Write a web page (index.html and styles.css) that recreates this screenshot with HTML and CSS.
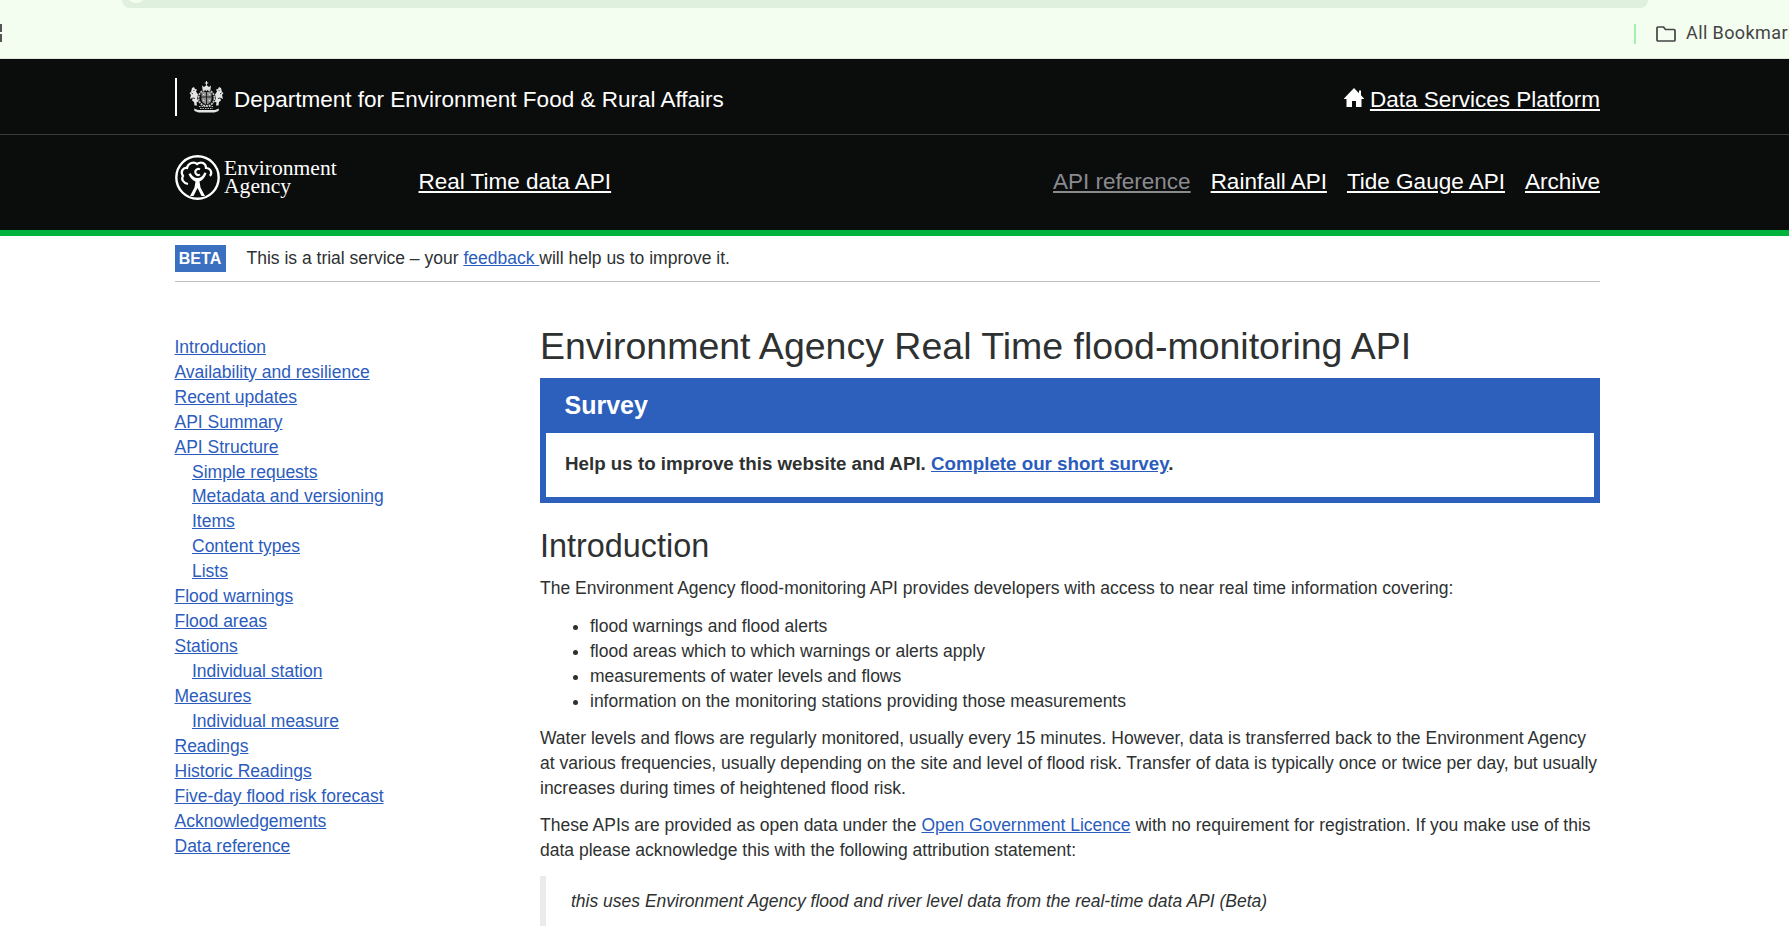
FILE: index.html
```html
<!DOCTYPE html>
<html lang="en">
<head>
    <meta charset="UTF-8">
    <meta name="viewport" content="width=device-width, initial-scale=1.0">
    <title>Environment Agency Real Time flood-monitoring API</title>
    <link rel="stylesheet" href="styles.css">
</head>
<body>
    <!-- browser chrome strip above the page -->
    <div class="browser-bar">
        <div class="address-bar"></div>
        <div class="dots"></div>
        <div class="bookmarks">
            <span class="bookmarks-sep"></span>
            <svg class="folder" width="20" height="16" viewBox="0 0 20 16"><path d="M1 14V2a1 1 0 0 1 1-1h5.500l2 2.500H18a1 1 0 0 1 1 1V14a1 1 0 0 1-1 1H2a1 1 0 0 1-1-1z" fill="none" stroke="#444" stroke-width="1.700"/></svg>
            <span>All Bookmarks</span>
        </div>
    </div>

    <header class="site-header">
        <div class="header-top">
            <div class="wrap top-row">
                <div class="dept">
                    <!-- royal arms, rough hand drawing -->
                    <svg class="crest" width="37" height="32" viewBox="0 0 37 32">
                        <g fill="#e4e4e4">
                            <path d="M18 0h1v1.500h1.200v1H19V4h-1V2.500h-1.200v-1H18z"/>
                            <path d="M14 4.500l2 1.500 2.500-2 2.500 2 2-1.500-.6 4.500h-7.800z"/>
                            <path d="M4 7l2-1 1 2 2 .5-1 2 2 3-1 4 1.500 3-2 1 .5 3H6.500l-.5-3.500-2-1.500 1-3-3 1.500 1-4-1.500-2L3 11z"/>
                            <path d="M33 7l-2-1-1 2-2 .5 1 2-2 3 1 4-1.500 3 2 1-.5 3h2.500l.5-3.500 2-1.500-1-3 3 1.500-1-4 1.500-2L34 11z"/>
                            <path d="M6 27.500l4 1.500h17l4-1.500-.5 2.500-4 1.500h-16l-4-1.500z"/>
                        </g>
                        <circle cx="18.500" cy="17" r="8" fill="none" stroke="#c8c8c8" stroke-width="1.800" stroke-dasharray="2 .8"/>
                        <path d="M13.500 11h10v7.500c0 2.500-2.500 4-5 5.500-2.500-1.500-5-3-5-5.500z" fill="#8c8c8c"/>
                        <path d="M13.500 16h10M18.500 11v13" stroke="#0b0c0c" stroke-width=".8"/>
                        <path d="M15 13l1.500 1M20.500 13l1.500 1M15 19l1.500 1M20.500 19l1.500 1" stroke="#eee" stroke-width="1"/>
                        <path d="M3.500 12l1.500 1M5 17l2 .5M32 13l1.500-1M30 17.500l2-.5M5.500 9l1 1M31.500 9l-1 1" stroke="#0b0c0c" stroke-width=".8"/>
                        <path d="M11 25.500h15M12 27.500h13" stroke="#bdbdbd" stroke-width="1" stroke-dasharray="1.500 1"/>
                    </svg>
                    <span class="dept-name">Department for Environment Food &amp; Rural Affairs</span>
                </div>
                <div class="platform">
                    <svg width="20" height="19" viewBox="0 0 20 19"><path d="M10 0l5 5.200V2.500h2v4.800l3 3.100v.6h-2.500V19H12v-6H8v6H2.500v-8.000H0v-.6z" fill="#fff"/></svg>
                    <a href="#">Data Services Platform</a>
                </div>
            </div>
        </div>
        <div class="wrap nav-row">
            <div class="ea-logo">
                <svg width="45" height="45" viewBox="0 0 45 45">
                    <circle cx="22.500" cy="22.500" r="21.200" fill="none" stroke="#fff" stroke-width="2.400"/>
                    <path d="M13 29C8 28 6 24 8 21c-3-4 0-9 4-8 1-5 7-7 10-4 4-3 9-1 9 4 4 0 7 4 4 8" fill="none" stroke="#fff" stroke-width="2.200"/>
                    <path d="M25 14.500a3 3 0 1 0 0 5" fill="none" stroke="#fff" stroke-width="2"/>
                    <path d="M13.500 19c1.500 4 4.500 6.500 7 7.500l-1 6L15 41h3.500l4-8 4 8H30l-4.500-8.500-1-6c2.500-1 5.500-3.500 7-8.500l-2.200-.6c-1.500 4-3.800 5.600-6.800 5.600s-5.300-1.600-6.800-4.800z" fill="#fff"/>
                </svg>
                <div class="ea-name">Environment<br>Agency</div>
            </div>
            <a class="nav-title" href="#">Real Time data API</a>
            <nav class="nav-links">
                <a class="current" href="#">API reference</a>
                <a href="#">Rainfall API</a>
                <a href="#">Tide Gauge API</a>
                <a href="#">Archive</a>
            </nav>
        </div>
    </header>

    <div class="wrap">
        <div class="beta-banner">
            <span class="beta-tag">BETA</span>
            <span>This is a trial service – your <a href="#">feedback </a>will help us to improve it.</span>
        </div>

        <div class="layout">
            <ul class="sidebar">
                <li><a href="#">Introduction</a></li>
                <li><a href="#">Availability and resilience</a></li>
                <li><a href="#">Recent updates</a></li>
                <li><a href="#">API Summary</a></li>
                <li><a href="#">API Structure</a>
                    <ul>
                        <li><a href="#">Simple requests</a></li>
                        <li><a href="#">Metadata and versioning</a></li>
                        <li><a href="#">Items</a></li>
                        <li><a href="#">Content types</a></li>
                        <li><a href="#">Lists</a></li>
                    </ul>
                </li>
                <li><a href="#">Flood warnings</a></li>
                <li><a href="#">Flood areas</a></li>
                <li><a href="#">Stations</a>
                    <ul>
                        <li><a href="#">Individual station</a></li>
                    </ul>
                </li>
                <li><a href="#">Measures</a>
                    <ul>
                        <li><a href="#">Individual measure</a></li>
                    </ul>
                </li>
                <li><a href="#">Readings</a></li>
                <li><a href="#">Historic Readings</a></li>
                <li><a href="#">Five-day flood risk forecast</a></li>
                <li><a href="#">Acknowledgements</a></li>
                <li><a href="#">Data reference</a></li>
            </ul>

            <main class="content">
                <h1>Environment Agency Real Time flood-monitoring API</h1>
                <div class="survey">
                    <h2>Survey</h2>
                    <p>Help us to improve this website and API. <a href="#">Complete our short survey</a>.</p>
                </div>
                <h2 class="section-title">Introduction</h2>
                <p>The Environment Agency flood-monitoring API provides developers with access to near real time information covering:</p>
                <ul class="covering">
                    <li>flood warnings and flood alerts</li>
                    <li>flood areas which to which warnings or alerts apply</li>
                    <li>measurements of water levels and flows</li>
                    <li>information on the monitoring stations providing those measurements</li>
                </ul>
                <p>Water levels and flows are regularly monitored, usually every 15 minutes. However, data is transferred back to the Environment Agency at various frequencies, usually depending on the site and level of flood risk. Transfer of data is typically once or twice per day, but usually increases during times of heightened flood risk.</p>
                <p>These APIs are provided as open data under the <a href="#">Open Government Licence</a> with no requirement for registration. If you make use of this data please acknowledge this with the following attribution statement:</p>
                <blockquote>this uses Environment Agency flood and river level data from the real-time data API (Beta)</blockquote>
            </main>
        </div>
    </div>
</body>
</html>
```

FILE: styles.css
```css
html, body {
    height: 948px;
    overflow: hidden;
}
body {
    margin: 0;
    font-family: "Liberation Sans", Arial, sans-serif;
    font-size: 16px;
    line-height: 25px;
    color: #2e3131;
    background: #fff;
}
a {
    color: #2b5cbd;
}
.wrap {
    width: 1425.500px;
    margin-left: 174.500px;
}

/* browser strip */
.browser-bar {
    height: 59px;
    box-sizing: border-box;
    position: relative;
    background: #f3fdf0;
    border-bottom: 1px solid #dfe6dc;
    font-family: Roboto, "Open Sans", sans-serif;
}
.address-bar {
    position: absolute;
    left: 122px;
    top: 0;
    width: 1526px;
    height: 8px;
    background: #e0f0df;
    border-radius: 0 0 12px 12px;
}
.address-bar::before {
    content: "";
    position: absolute;
    left: 6px;
    top: -8px;
    width: 16px;
    height: 11px;
    border-radius: 50%;
    background: #f3fdf0;
}
.dots {
    position: absolute;
    left: 0;
    top: 24px;
    width: 2px;
    height: 18px;
    background: repeating-linear-gradient(#555 0 8px, transparent 8px 10px);
}
.bookmarks {
    position: absolute;
    left: 1634px;
    top: 20px;
    display: flex;
    align-items: center;
    gap: 10px;
    width: 155px;
    overflow: hidden;
    white-space: nowrap;
    color: #444;
    font-size: 18px;
    letter-spacing: .4px;
}
.bookmarks-sep {
    width: 2px;
    height: 20px;
    margin-top: 2px;
    margin-right: 10px;
    background: #a6f0ae;
    flex: none;
}
.folder {
    flex: none;
    margin-top: 3px;
}

/* header */
.site-header {
    background: #0b0c0c;
    border-bottom: 6px solid #00b33c;
    color: #fff;
}
.site-header a {
    color: #fff;
}
.header-top {
    height: 75px;
    border-bottom: 1px solid #3a3b3d;
}
.top-row {
    height: 75px;
    display: flex;
    justify-content: space-between;
    align-items: center;
}
.dept {
    display: flex;
    align-items: center;
    height: 38px;
    border-left: 2px solid #fff;
    padding-left: 11px;
    font-size: 22.500px;
}
.dept-name {
    padding-top: 5px;
}
.crest {
    margin-right: 9.500px;
}
.platform {
    display: flex;
    align-items: center;
    gap: 6px;
    font-size: 22.500px;
}
.platform a {
    padding-top: 5px;
}
.platform svg {
    margin-top: 2px;
}
.nav-row {
    height: 93px;
    padding-bottom: 2px;
    display: flex;
    align-items: center;
}
.ea-logo {
    display: flex;
    align-items: flex-start;
    align-self: flex-start;
    width: 244px;
    margin-top: 20px;
    gap: 4.500px;
}
.ea-name {
    font-family: "Liberation Serif", serif;
    font-size: 21.600px;
    line-height: 18px;
    margin-top: 4px;
}
.nav-title, .nav-links {
    font-size: 22.500px;
}
.nav-links {
    margin-left: auto;
    display: flex;
    gap: 20px;
}
.site-header .nav-links .current {
    color: #8a8b8f;
}

/* beta */
.beta-banner {
    height: 45px;
    display: flex;
    align-items: center;
    gap: 21px;
    border-bottom: 1px solid #bfc1c3;
    font-size: 17.500px;
}
.beta-tag {
    width: 51px;
    height: 27px;
    background: #3b6fc0;
    color: #fff;
    font-weight: bold;
    font-size: 16px;
    line-height: 27px;
    text-align: center;
}

/* two columns */
.layout {
    display: flex;
    margin-top: 41px;
}
.sidebar, .sidebar ul {
    list-style: none;
    margin: 0;
    padding: 0;
}
.sidebar {
    width: 365.500px;
    flex: none;
    padding-top: 11.740px;
    font-size: 17.500px;
    line-height: 24.950px;
}
.sidebar ul {
    padding-left: 17.500px;
}
.content {
    flex: 1;
    font-size: 17.500px;
}
h1 {
    margin: 0 0 9px;
    font-size: 37.500px;
    line-height: 46px;
    font-weight: normal;
}
.survey {
    border: 6px solid #2d5fbc;
    border-top: 0;
}
.survey h2 {
    margin: 0 -6px;
    padding: 13px 24.500px;
    background: #2d5fbc;
    color: #fff;
    font-size: 25px;
    line-height: 29px;
}
.survey p {
    margin: 0;
    padding: 17px 19px 19px;
    font-weight: bold;
    font-size: 18.750px;
    line-height: 28px;
}
.section-title {
    margin: 23px 0 10px;
    font-size: 32.400px;
    line-height: 40px;
    font-weight: normal;
}
.content p {
    margin: 0 0 12px;
}
.content .survey p {
    margin: 0;
}
.covering {
    margin: 13px 0 12px;
    padding-left: 50px;
}
blockquote {
    margin: 13px 0 0;
    padding: 12.500px 25px;
    border-left: 6px solid #ebebeb;
    font-style: italic;
}
```
